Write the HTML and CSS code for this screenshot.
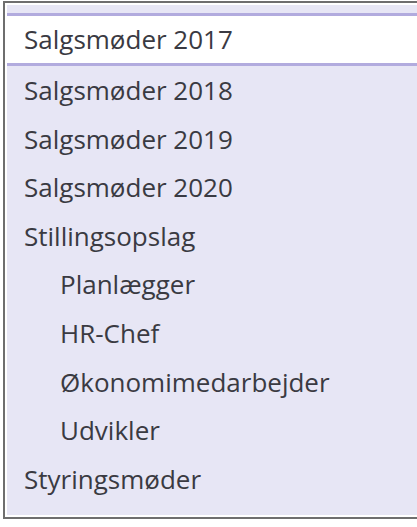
FILE: index.html
```html
<!DOCTYPE html>
<html lang="da">
<head>
    <meta charset="UTF-8">
    <meta name="viewport" content="width=device-width, initial-scale=1.0">
    <title>Mapper</title>
    <link rel="stylesheet" href="styles.css">
</head>
<body>
    <div class="frame">
        <ul class="list">
            <li class="item selected">Salgsmøder 2017</li>
            <li class="item">Salgsmøder 2018</li>
            <li class="item">Salgsmøder 2019</li>
            <li class="item">Salgsmøder 2020</li>
            <li class="item">Stillingsopslag</li>
            <li class="item sub">Planlægger</li>
            <li class="item sub">HR-Chef</li>
            <li class="item sub">Økonomimedarbejder</li>
            <li class="item sub">Udvikler</li>
            <li class="item">Styringsmøder</li>
        </ul>
    </div>
</body>
</html>
```

FILE: styles.css
```css
html, body{
    margin: 0;
    overflow: hidden;
    background-color: #fff;
}
.frame{
    margin: 1px 0 0 3px;
    border: 2px solid #6e6e6e;
    border-right: none;
    padding: 2px 0 2px 2px;
    background-color: #fff;
}
.list{
    list-style: none;
    margin: 0;
    padding: 8px 0 12px 0;
    background-color: #e7e6f5;
    font-family: "Open Sans", "Noto Sans", sans-serif;
    font-size: 26px;
    color: #3a3a42;
}
.item{
    height: 48.6px;
    line-height: 48.6px;
    padding-left: 17px;
    white-space: nowrap;
}
.selected{
    height: 47px;
    line-height: 47px;
    background-color: #fff;
    border-top: 3px solid #b2abde;
    border-bottom: 3px solid #b2abde;
}
.sub{
    padding-left: 53px;
}
```
